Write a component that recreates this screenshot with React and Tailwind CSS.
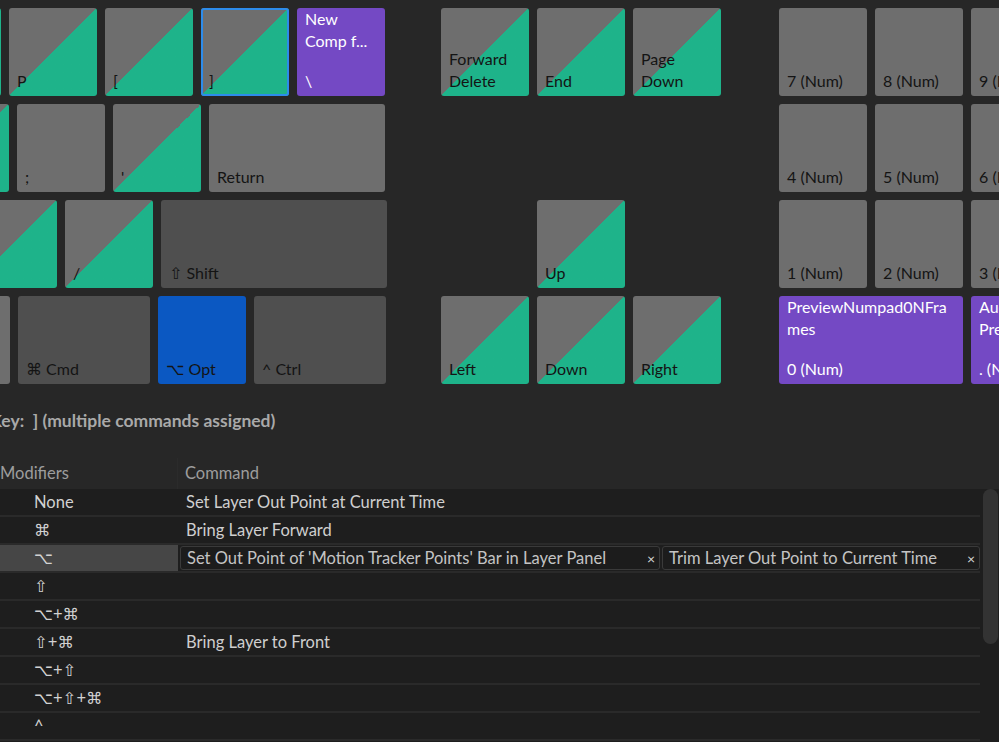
import React from "react";

const KIND = {
  gray: "bg-[#6e6e6e] text-[#141414]",
  split: "bg-linear-to-br from-[#6e6e6e] from-50% to-[#1eb38a] to-50% text-[#141414]",
  dark: "bg-[#4f4f4f] text-[#141414]",
  purple: "bg-[#7449c4] text-white",
  blue: "bg-[#0b58c2] text-[#141414]",
  none: "bg-transparent",
};

const Key = ({ label, top, kind = "gray", w = "w-[88px]", selected }) => (
  <div
    className={`relative h-[88px] shrink-0 rounded-[3px] overflow-hidden flex flex-col justify-between px-2 pb-1 text-[16px] leading-[22px] ${w} ${KIND[kind]} ${
      selected ? "ring-2 ring-inset ring-[#2d8ceb]" : ""
    }`}
  >
    <div className="whitespace-nowrap">
      {top && top.map((t, i) => <div key={i}>{t}</div>)}
    </div>
    <div className="whitespace-pre">{label}</div>
  </div>
);

const mainRows = [
  {
    cls: "",
    keys: [
      { kind: "split" },
      { label: "P", kind: "split" },
      { label: "[", kind: "split" },
      { label: "]", kind: "split", selected: true },
      { label: "\\", kind: "purple", top: ["New", "Comp f..."] },
    ],
  },
  {
    cls: "",
    keys: [
      { kind: "split" },
      { label: ";" },
      { label: "'", kind: "split" },
      { label: "Return", w: "w-[176px]" },
    ],
  },
  {
    cls: "-mr-[2px]",
    keys: [
      { kind: "split" },
      { label: "/", kind: "split" },
      { label: "⇧ Shift", kind: "dark", w: "w-[226px]" },
    ],
  },
  {
    cls: "-mr-[1px]",
    keys: [
      {},
      { label: "⌘ Cmd", kind: "dark", w: "w-[132px]" },
      { label: "⌥ Opt", kind: "blue" },
      { label: "^ Ctrl", kind: "dark", w: "w-[132px]" },
    ],
  },
];

const navKeys = [
  { label: "Forward\nDelete", kind: "split" },
  { label: "End", kind: "split" },
  { label: "Page\nDown", kind: "split" },
  { kind: "none" },
  { kind: "none" },
  { kind: "none" },
  { kind: "none" },
  { label: "Up", kind: "split" },
  { kind: "none" },
  { label: "Left", kind: "split" },
  { label: "Down", kind: "split" },
  { label: "Right", kind: "split" },
];

const rows = [
  { mod: "None", cmd: "Set Layer Out Point at Current Time" },
  { mod: "⌘", cmd: "Bring Layer Forward" },
  {
    mod: "⌥",
    active: true,
    pills: [
      { text: "Set Out Point of 'Motion Tracker Points' Bar in Layer Panel", w: "w-[480px]" },
      { text: "Trim Layer Out Point to Current Time", w: "w-[318px]" },
    ],
  },
  { mod: "⇧" },
  { mod: "⌥+⌘" },
  { mod: "⇧+⌘", cmd: "Bring Layer to Front" },
  { mod: "⌥+⇧" },
  { mod: "⌥+⇧+⌘" },
  { mod: "^" },
];

export default function App() {
  return (
    <div
      className="w-[999px] h-[742px] overflow-hidden bg-[#272727] pt-2"
      style={{ fontFamily: 'Lato, "DejaVu Sans", sans-serif' }}
    >
      {/* keyboard */}
      <div className="flex">
        <div className="w-[385px] shrink-0 flex flex-col gap-2">
          {mainRows.map((row, i) => (
            <div key={i} className={`flex justify-end gap-2 ${row.cls}`}>
              {row.keys.map((k, j) => (
                <Key key={j} {...k} />
              ))}
            </div>
          ))}
        </div>

        <div className="ml-[56px] grid grid-cols-[88px_88px_88px] auto-rows-[88px] gap-2">
          {navKeys.map((k, i) => (
            <Key key={i} {...k} />
          ))}
        </div>

        <div className="ml-[58px] flex flex-col gap-2">
          <div className="flex gap-2">
            <Key label="7 (Num)" />
            <Key label="8 (Num)" />
            <Key label="9 (Num)" />
          </div>
          <div className="flex gap-2">
            <Key label="4 (Num)" />
            <Key label="5 (Num)" />
            <Key label="6 (Num)" />
          </div>
          <div className="flex gap-2">
            <Key label="1 (Num)" />
            <Key label="2 (Num)" />
            <Key label="3 (Num)" />
          </div>
          <div className="flex gap-2">
            <Key label="0 (Num)" kind="purple" w="w-[184px]" top={["PreviewNumpad0NFra", "mes"]} />
            <Key label=". (Num)" kind="purple" top={["Audio", "Preview"]} />
          </div>
        </div>
      </div>

      {/* key info */}
      <div className="mt-[26px] -ml-[10px] h-[22px] leading-[22px] text-[17.5px] font-bold text-[#a9a9a9] whitespace-pre">
        Key:  ] (multiple commands assigned)
      </div>

      {/* table header */}
      <div className="mt-[26px] h-[31px] flex items-center text-[16.5px] text-[#9d9d9d]">
        <div className="w-[178px] h-full flex items-center border-r border-[#2b2b2b]">Modifiers</div>
        <div className="pl-[7px]">Command</div>
      </div>

      {/* table body */}
      <div className="flex bg-[#1e1e1e] h-[260px]">
        <div className="w-[980px] shrink-0">
          {rows.map((r, i) => (
            <div
              key={i}
              className="h-[28px] flex items-center border-b-2 border-[#2a2a2a] text-[16.5px] text-[#d2d2d2]"
            >
              <div
                className={`w-[178px] h-full flex items-center pl-[34px] ${
                  r.active ? "bg-[#464646]" : ""
                }`}
              >
                {r.mod}
              </div>
              {r.pills ? (
                <div className="flex gap-[2px] pl-[2px]">
                  {r.pills.map((p, j) => (
                    <div
                      key={j}
                      className={`h-[24px] flex items-center justify-between pl-[6px] pr-[4px] border border-[#3a3a3a] rounded-[3px] bg-[#1c1c1c] ${p.w}`}
                    >
                      <span className="text-[#c4c4c4] whitespace-nowrap">{p.text}</span>
                      <span className="text-[14px] text-[#d8d8d8]">×</span>
                    </div>
                  ))}
                </div>
              ) : (
                <div className="pl-[8px] text-[#cfcfcf]">{r.cmd}</div>
              )}
            </div>
          ))}
        </div>
        <div className="ml-[3px] w-[15px] h-[155px] rounded-full bg-[#333333]"></div>
      </div>
    </div>
  );
}
